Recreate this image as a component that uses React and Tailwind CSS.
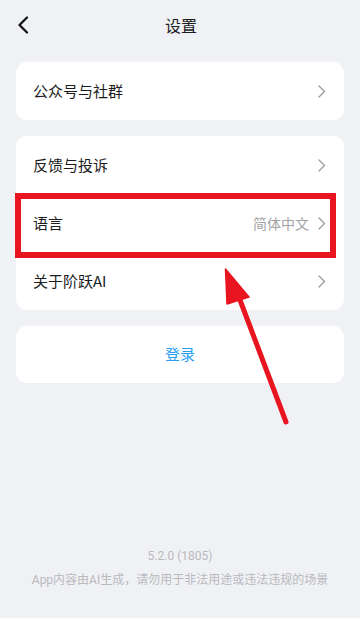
import React from "react";

const font = { fontFamily: '"Noto Sans CJK SC", "Noto Sans", sans-serif' };

function Chevron() {
  return (
    <svg width="8" height="13" viewBox="0 0 8 13" className="shrink-0">
      <path d="M1 1 L6.5 6.5 L1 12" fill="none" stroke="#9a9a9e" strokeWidth="1.3" strokeLinecap="round" strokeLinejoin="round" />
    </svg>
  );
}

function Row({ label, value }) {
  return (
    <div className="flex items-center h-[58px] pl-[17px] pr-[18px]">
      <span className="text-[15px] text-[#1c1c1e] flex-1">{label}</span>
      {value && <span className="text-[14px] text-[#a3a3a6] mr-[9px]">{value}</span>}
      <Chevron />
    </div>
  );
}

export default function App() {
  return (
    <div className="relative w-[360px] h-[618px] bg-[#f0f1f5] flex flex-col overflow-hidden" style={font}>
      <div className="relative h-[50px] flex items-center justify-center shrink-0">
        <svg width="12" height="18" viewBox="0 0 12 18" className="absolute left-[17px] top-[16px]">
          <path d="M10 1.5 L2.5 9 L10 16.5" fill="none" stroke="#111" strokeWidth="2.2" strokeLinecap="round" strokeLinejoin="round" />
        </svg>
        <span className="text-[16px] text-[#1c1c1e] ml-[2px]">设置</span>
      </div>

      <div className="mx-4 mt-3 bg-white rounded-[11px]">
        <Row label="公众号与社群" />
      </div>

      <div className="mx-4 mt-4 bg-white rounded-[11px]">
        <Row label="反馈与投诉" />
        <Row label="语言" value="简体中文" />
        <Row label="关于阶跃AI" />
      </div>

      <div className="mx-4 mt-4 bg-white rounded-[11px] h-[57px] flex items-center justify-center">
        <span className="text-[15px] text-[#2a9df4]">登录</span>
      </div>

      <div className="mt-auto pb-[30px] flex flex-col items-center text-[#b9b9bd]">
        <span className="text-[12px] leading-[16px]" style={{ fontFamily: 'Roboto, "Noto Sans CJK SC", sans-serif' }}>5.2.0 (1805)</span>
        <span className="text-[12px] leading-[16px] mt-[8px]" style={{ fontFamily: 'Roboto, "Noto Sans CJK SC", sans-serif' }}>App内容由AI生成，请勿用于非法用途或违法违规的场景</span>
      </div>

      <div className="absolute left-[15px] top-[193px] w-[321px] h-[65px] border-[6px] border-[#e8141f]" />

      <svg className="absolute left-0 top-0" width="360" height="618" viewBox="0 0 360 618">
        <line x1="240" y1="300" x2="286" y2="422" stroke="#e8141f" strokeWidth="5" strokeLinecap="round" />
        <polygon points="225.5,269 227,304 249,297" fill="#e8141f" stroke="#e8141f" strokeWidth="1.5" strokeLinejoin="round" />
      </svg>
    </div>
  );
}
